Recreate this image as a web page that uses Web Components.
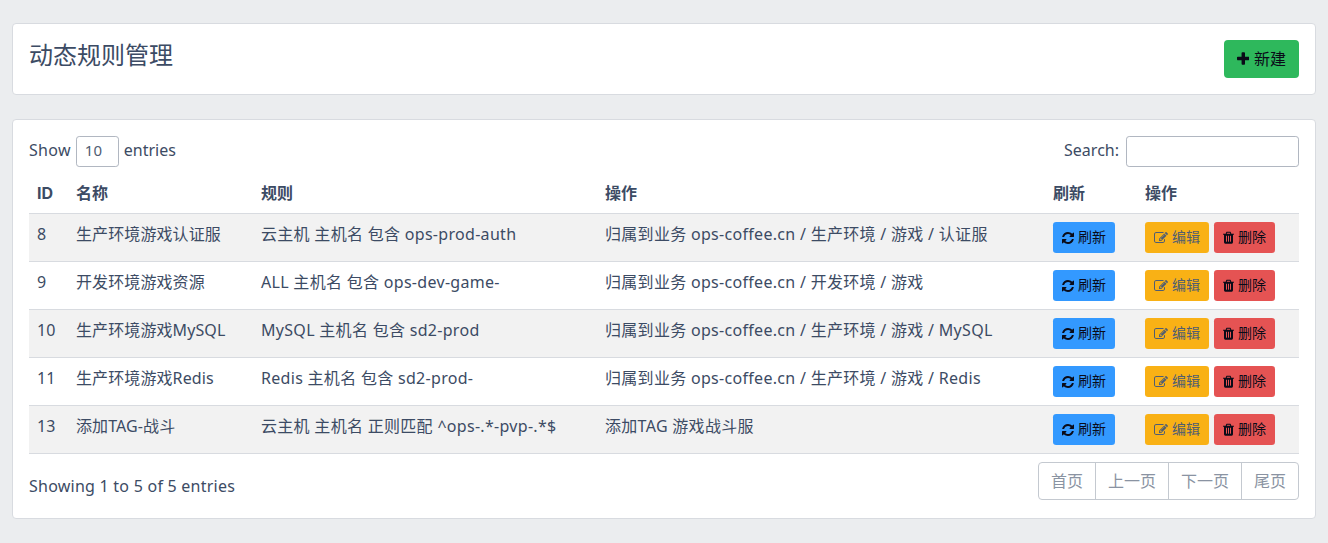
<!DOCTYPE html>
<html lang="zh">
<head>
<meta charset="utf-8">
<title>动态规则管理</title>
<style>
  html, body { margin: 0; background: #ebedef; }
  body {
    font: 16px/1.5 "Noto Sans", "Noto Sans CJK SC", sans-serif;
    color: #3c4b64;
    padding: 23px 12px 0;
  }
</style>
</head>
<body>
<rule-page></rule-page>

<script>
const ICONS = {
  plus: ['0 0 1408 1792', 'M1408 736v192q0 40-28 68t-68 28h-416v416q0 40-28 68t-68 28h-192q-40 0-68-28t-28-68v-416h-416q-40 0-68-28t-28-68v-192q0-40 28-68t68-28h416v-416q0-40 28-68t68-28h192q40 0 68 28t28 68v416h416q40 0 68 28t28 68z'],
  refresh: ['0 0 1536 1792', 'M1511 1056q0 5-1 7-64 268-268 434.5t-478 166.5q-146 0-282.5-55t-243.5-157l-129 129q-19 19-45 19t-45-19-19-45v-448q0-26 19-45t45-19h448q26 0 45 19t19 45-19 45l-137 137q71 66 161 102t187 36q134 0 250-65t186-179q11-17 53-117 8-23 30-23h192q13 0 22.5 9.5t9.5 22.5zm25-800v448q0 26-19 45t-45 19h-448q-26 0-45-19t-19-45 19-45l138-138q-148-137-349-137-134 0-250 65t-186 179q-11 17-53 117-8 23-30 23h-199q-13 0-22.5-9.5t-9.5-22.5v-7q65-268 270-434.5t480-166.5q146 0 284 55.5t245 156.5l130-129q19-19 45-19t45 19 19 45z'],
  edit: ['0 0 1792 1792', 'M888 1184l116-116-152-152-116 116v56h96v96h56zm440-720q-16-16-33 1l-350 350q-17 17-1 33t33-1l350-350q17-17 1-33zm80 594v190q0 119-84.5 203.5t-203.5 84.5h-832q-119 0-203.5-84.5t-84.5-203.5v-832q0-119 84.5-203.5t203.5-84.5h832q63 0 117 25 15 7 18 23 3 17-9 29l-49 49q-14 14-32 8-23-6-45-6h-832q-66 0-113 47t-47 113v832q0 66 47 113t113 47h832q66 0 113-47t47-113v-126q0-13 9-22l64-64q15-15 35-8t20 29zm-96-738l288 288-672 672h-288v-288zm444 132l-92 92-288-288 92-92q28-28 68-28t68 28l152 152q28 28 28 68t-28 68z'],
  trash: ['0 0 1408 1792', 'M512 1328v-704q0-14-9-23t-23-9h-64q-14 0-23 9t-9 23v704q0 14 9 23t23 9h64q14 0 23-9t9-23zm256 0v-704q0-14-9-23t-23-9h-64q-14 0-23 9t-9 23v704q0 14 9 23t23 9h64q14 0 23-9t9-23zm256 0v-704q0-14-9-23t-23-9h-64q-14 0-23 9t-9 23v704q0 14 9 23t23 9h64q14 0 23-9t9-23zm-544-992h448l-48-117q-7-9-17-11h-317q-10 2-17 11zm928 32v64q0 14-9 23t-23 9h-96v948q0 83-47 143.5t-113 60.5h-832q-66 0-113-58.5t-47-141.5v-952h-96q-14 0-23-9t-9-23v-64q0-14 9-23t23-9h309l70-167q15-37 54-63t79-26h320q40 0 79 26t54 63l70 167h309q14 0 23 9t9 23z']
};

const COLUMNS = '39px 185px 344px 448px 92px 162px';

const RULES = [
  ['8', '生产环境游戏认证服', '云主机 主机名 包含 ops-prod-auth', '归属到业务 ops-coffee.cn / 生产环境 / 游戏 / 认证服'],
  ['9', '开发环境游戏资源', 'ALL 主机名 包含 ops-dev-game-', '归属到业务 ops-coffee.cn / 开发环境 / 游戏'],
  ['10', '生产环境游戏MySQL', 'MySQL 主机名 包含 sd2-prod', '归属到业务 ops-coffee.cn / 生产环境 / 游戏 / MySQL'],
  ['11', '生产环境游戏Redis', 'Redis 主机名 包含 sd2-prod-', '归属到业务 ops-coffee.cn / 生产环境 / 游戏 / Redis'],
  ['13', '添加TAG-战斗', '云主机 主机名 正则匹配 ^ops-.*-pvp-.*$', '添加TAG 游戏战斗服']
];

customElements.define('ui-card', class extends HTMLElement {
  constructor() {
    super();
    this.attachShadow({ mode: 'open' }).innerHTML = `
      <style>
        :host {
          display: block;
          background: #fff;
          border: 1px solid #d8dbe0;
          border-radius: 4px;
          padding: 16px;
        }
      </style>
      <slot></slot>`;
  }
});

customElements.define('ui-button', class extends HTMLElement {
  constructor() {
    super();
    this.attachShadow({ mode: 'open' });
  }
  connectedCallback() {
    const [box, d] = ICONS[this.getAttribute('icon')];
    const w = box.split(' ')[2] / 1792 * 14;
    this.shadowRoot.innerHTML = `
      <style>
        :host {
          display: inline-flex;
          align-items: center;
          gap: 4px;
          box-sizing: border-box;
          height: 31px;
          padding: 0 9px;
          border-radius: 3.2px;
          font-size: 14px;
          line-height: 21px;
          background: var(--bg);
          color: var(--fg);
          white-space: nowrap;
        }
        :host([size=lg]) { height: 38px; padding: 0 13px; gap: 4.5px; border-radius: 4px; font-size: 16px; }
        svg { width: ${w}px; height: 14px; fill: currentColor; flex: none; }
        :host([size=lg]) svg { width: ${w * 16 / 14}px; height: 16px; }
        slot { display: block; margin-top: -2px; }
        :host([size=lg]) slot { margin-top: 0; }
      </style>
      <svg viewBox="${box}"><path d="${d}"/></svg><slot></slot>`;
  }
});

customElements.define('entries-bar', class extends HTMLElement {
  constructor() {
    super();
    this.attachShadow({ mode: 'open' }).innerHTML = `
      <style>
        :host { display: flex; justify-content: space-between; height: 31px; }
        label { display: flex; align-items: flex-start; gap: 5px; }
        label.right { gap: 7px; }
        .t { margin-top: 2px; }
        .show { letter-spacing: .3px; }
        .box {
          box-sizing: border-box;
          height: 31px;
          border: 1px solid #b1b7c1;
          border-radius: 3.2px;
          background: #fff;
          font-size: 15px;
          line-height: 27px;
          color: #4f5d73;
          padding: 0 8px;
        }
        .len { width: 43px; }
        .search { width: 173px; }
      </style>
      <label><span class="t show">Show</span><span class="box len">10</span><span class="t">entries</span></label>
      <label class="right"><span class="t">Search:</span><span class="box search"></span></label>`;
  }
});

customElements.define('rule-head', class extends HTMLElement {
  constructor() {
    super();
    const cells = ['ID', '名称', '规则', '操作', '刷新', '操作'];
    this.attachShadow({ mode: 'open' }).innerHTML = `
      <style>
        :host {
          display: grid;
          grid-template-columns: ${COLUMNS};
          margin-top: 6px;
          border-bottom: 1px solid #d8dbe0;
          font-family: Inter, "Noto Sans CJK SC", sans-serif;
          font-weight: 700;
        }
        div { padding: 8px; }
        div:first-child { letter-spacing: 1px; }
      </style>
      ${cells.map(c => `<div>${c}</div>`).join('')}`;
  }
});

customElements.define('rule-row', class extends HTMLElement {
  constructor() {
    super();
    this.attachShadow({ mode: 'open' });
  }
  connectedCallback() {
    const a = n => this.getAttribute(n);
    this.shadowRoot.innerHTML = `
      <style>
        :host {
          display: grid;
          grid-template-columns: ${COLUMNS};
          border-bottom: 1px solid #d8dbe0;
        }
        :host(:nth-child(odd)) { background: #f2f2f2; }
        .cell { padding: 8px; white-space: nowrap; }
        .name { letter-spacing: .1px; }
        .wide { letter-spacing: .3px; }
        .actions { display: flex; gap: 5px; }
        ui-button { --fg: #0a0b18; }
        .refresh { --bg: #39f; }
        .edit { --bg: #f9b115; --fg: #4f5d73; }
        .del { --bg: #e55353; }
      </style>
      <div class="cell">${a('rid')}</div>
      <div class="cell name">${a('name')}</div>
      <div class="cell wide">${a('rule')}</div>
      <div class="cell wide">${a('action')}</div>
      <div class="cell"><ui-button class="refresh" icon="refresh">刷新</ui-button></div>
      <div class="cell actions">
        <ui-button class="edit" icon="edit">编辑</ui-button>
        <ui-button class="del" icon="trash">删除</ui-button>
      </div>`;
  }
});

customElements.define('page-nav', class extends HTMLElement {
  constructor() {
    super();
    const items = ['首页', '上一页', '下一页', '尾页'];
    this.attachShadow({ mode: 'open' }).innerHTML = `
      <style>
        :host {
          display: flex;
          border: 1px solid #c4c9d0;
          border-radius: 4px;
          color: #8a93a2;
        }
        span { padding: 6px 12px; }
        span + span { border-left: 1px solid #c4c9d0; }
      </style>
      ${items.map(i => `<span>${i}</span>`).join('')}`;
  }
});

customElements.define('rule-page', class extends HTMLElement {
  constructor() {
    super();
    const rows = RULES.map(r =>
      `<rule-row rid="${r[0]}" name="${r[1]}" rule="${r[2]}" action="${r[3]}"></rule-row>`).join('');
    this.attachShadow({ mode: 'open' }).innerHTML = `
      <style>
        :host { display: flex; flex-direction: column; gap: 24px; }
        .top { display: flex; justify-content: space-between; }
        h1 { margin: 0; font-size: 24px; font-weight: 400; line-height: 30px; }
        .top ui-button { --bg: #2eb85c; --fg: #0a0b18; }
        .foot { display: flex; justify-content: space-between; align-items: flex-start; margin-top: 8px; padding-bottom: 2px; }
        .info { margin-top: 12px; letter-spacing: .24px; }
      </style>
      <ui-card>
        <div class="top">
          <h1>动态规则管理</h1>
          <ui-button size="lg" icon="plus">新建</ui-button>
        </div>
      </ui-card>
      <ui-card>
        <entries-bar></entries-bar>
        <rule-head></rule-head>
        <div>${rows}</div>
        <div class="foot">
          <span class="info">Showing 1 to 5 of 5 entries</span>
          <page-nav></page-nav>
        </div>
      </ui-card>`;
  }
});
</script>
</body>
</html>
